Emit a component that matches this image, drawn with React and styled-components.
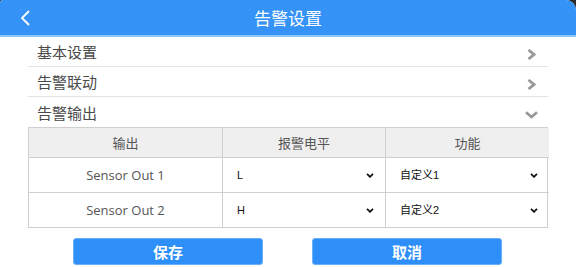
import React from "react";
import styled, { createGlobalStyle } from "styled-components";

const Global = createGlobalStyle`
  html, body { margin: 0; padding: 0; background: #2b2b2b; }
  body { font-family: "Noto Sans CJK SC", "Noto Sans", sans-serif; }
  * { box-sizing: border-box; }
`;

const Page = styled.div`
  width: 576px;
  height: 267px;
  background: #fff;
  border-radius: 3px 10px 0 0;
  overflow: hidden;
  display: flex;
  flex-direction: column;
`;

const Header = styled.div`
  height: 37px;
  background: #3592f6;
  border-bottom: 2px solid #8fc4f7;
  display: flex;
  align-items: center;
  justify-content: center;
  position: relative;
  color: #fff;
  font-size: 17px;
  line-height: 1;
  flex-shrink: 0;
`;

const Back = styled.button`
  position: absolute;
  left: 18px;
  top: 9px;
  width: 16px;
  height: 18px;
  padding: 0;
  border: 0;
  background: transparent;
  display: flex;
`;

const Content = styled.div`
  margin: 0 28px;
  display: flex;
  flex-direction: column;
`;

const Row = styled.div`
  height: 30px;
  display: flex;
  align-items: center;
  justify-content: space-between;
  padding: 0 10px 0 9px;
  border-bottom: ${(p) => (p.$last ? "none" : "1px solid #e2e2e2")};
  font-size: 15px;
  color: #4a4a4a;
`;

const ChevronBox = styled.span`
  display: flex;
  width: 14px;
  justify-content: center;
  margin-top: 5px;
`;

const Table = styled.div`
  display: grid;
  grid-template-columns: 194px 163px 163px;
  border: 1px solid #cfcfcf;
`;

const HeadCell = styled.div`
  height: 29px;
  background: #efefef;
  display: flex;
  align-items: center;
  justify-content: center;
  font-size: 13px;
  color: #555;
  border-right: ${(p) => (p.$end ? "none" : "1px solid #cfcfcf")};
`;

const Cell = styled.div`
  height: 35px;
  display: flex;
  align-items: center;
  justify-content: center;
  font-size: 13px;
  font-family: "Open Sans", "Noto Sans CJK SC", sans-serif;
  color: #555;
  border-top: 1px solid #cfcfcf;
  border-right: ${(p) => (p.$end ? "none" : "1px solid #cfcfcf")};
  padding: 0 8px;
`;

const SelectWrap = styled.div`
  position: relative;
  width: 100%;
  height: 24px;
`;

const Select = styled.select`
  appearance: none;
  -webkit-appearance: none;
  width: 100%;
  height: 24px;
  border: 0;
  outline: 0;
  background: #fff;
  font-family: "Liberation Sans", "Noto Sans CJK SC", sans-serif;
  font-size: 11px;
  color: #111;
  padding-left: 6px;
`;

const SelectArrow = styled.svg`
  position: absolute;
  right: 3px;
  top: 10px;
  pointer-events: none;
`;

const Buttons = styled.div`
  display: flex;
  gap: 49px;
  padding: 10px 0 2px 45px;
  border-bottom: 1px solid #e4e4e4;
`;

const Button = styled.button`
  width: 190px;
  height: 27px;
  border: 1px solid #6cb1f8;
  border-radius: 3px;
  background: #2e8ff8;
  color: #fff;
  font-family: "Noto Sans CJK SC", sans-serif;
  font-weight: 700;
  font-size: 15px;
  line-height: 1;
  padding: 0;
`;

const Chevron = ({ down }) => (
  <ChevronBox>
    {down ? (
      <svg width="13" height="8" viewBox="0 0 13 8">
        <path d="M1 1.2 L6.5 6 L12 1.2" fill="none" stroke="#999" strokeWidth="2.8" />
      </svg>
    ) : (
      <svg width="9" height="11" viewBox="0 0 9 11">
        <path d="M1.5 1 L7 5.5 L1.5 10" fill="none" stroke="#999" strokeWidth="2.8" />
      </svg>
    )}
  </ChevronBox>
);

const rows = [
  { name: "Sensor Out 1", level: "L", fn: "自定义1" },
  { name: "Sensor Out 2", level: "H", fn: "自定义2" },
];

const Dropdown = ({ value, options }) => (
  <SelectWrap>
    <Select defaultValue={value}>
      {options.map((o) => (
        <option key={o} value={o}>
          {o}
        </option>
      ))}
    </Select>
    <SelectArrow width="8" height="5" viewBox="0 0 8 5">
      <path d="M1 0.8 L4 3.8 L7 0.8" fill="none" stroke="#111" strokeWidth="1.8" />
    </SelectArrow>
  </SelectWrap>
);

export default function App() {
  return (
    <>
      <Global />
      <Page>
        <Header>
          <Back aria-label="back">
            <svg width="16" height="18" viewBox="0 0 16 18">
              <path d="M11 2 L4 9 L11 16" fill="none" stroke="#fff" strokeWidth="1.8" />
            </svg>
          </Back>
          告警设置
        </Header>
        <Content>
          <Row>
            基本设置
            <Chevron />
          </Row>
          <Row>
            告警联动
            <Chevron />
          </Row>
          <Row $last>
            告警输出
            <Chevron down />
          </Row>
          <Table>
            <HeadCell>输出</HeadCell>
            <HeadCell>报警电平</HeadCell>
            <HeadCell $end>功能</HeadCell>
            {rows.map((r) => (
              <React.Fragment key={r.name}>
                <Cell>{r.name}</Cell>
                <Cell>
                  <Dropdown value={r.level} options={["L", "H"]} />
                </Cell>
                <Cell $end>
                  <Dropdown value={r.fn} options={["自定义1", "自定义2"]} />
                </Cell>
              </React.Fragment>
            ))}
          </Table>
          <Buttons>
            <Button>保存</Button>
            <Button>取消</Button>
          </Buttons>
        </Content>
      </Page>
    </>
  );
}
